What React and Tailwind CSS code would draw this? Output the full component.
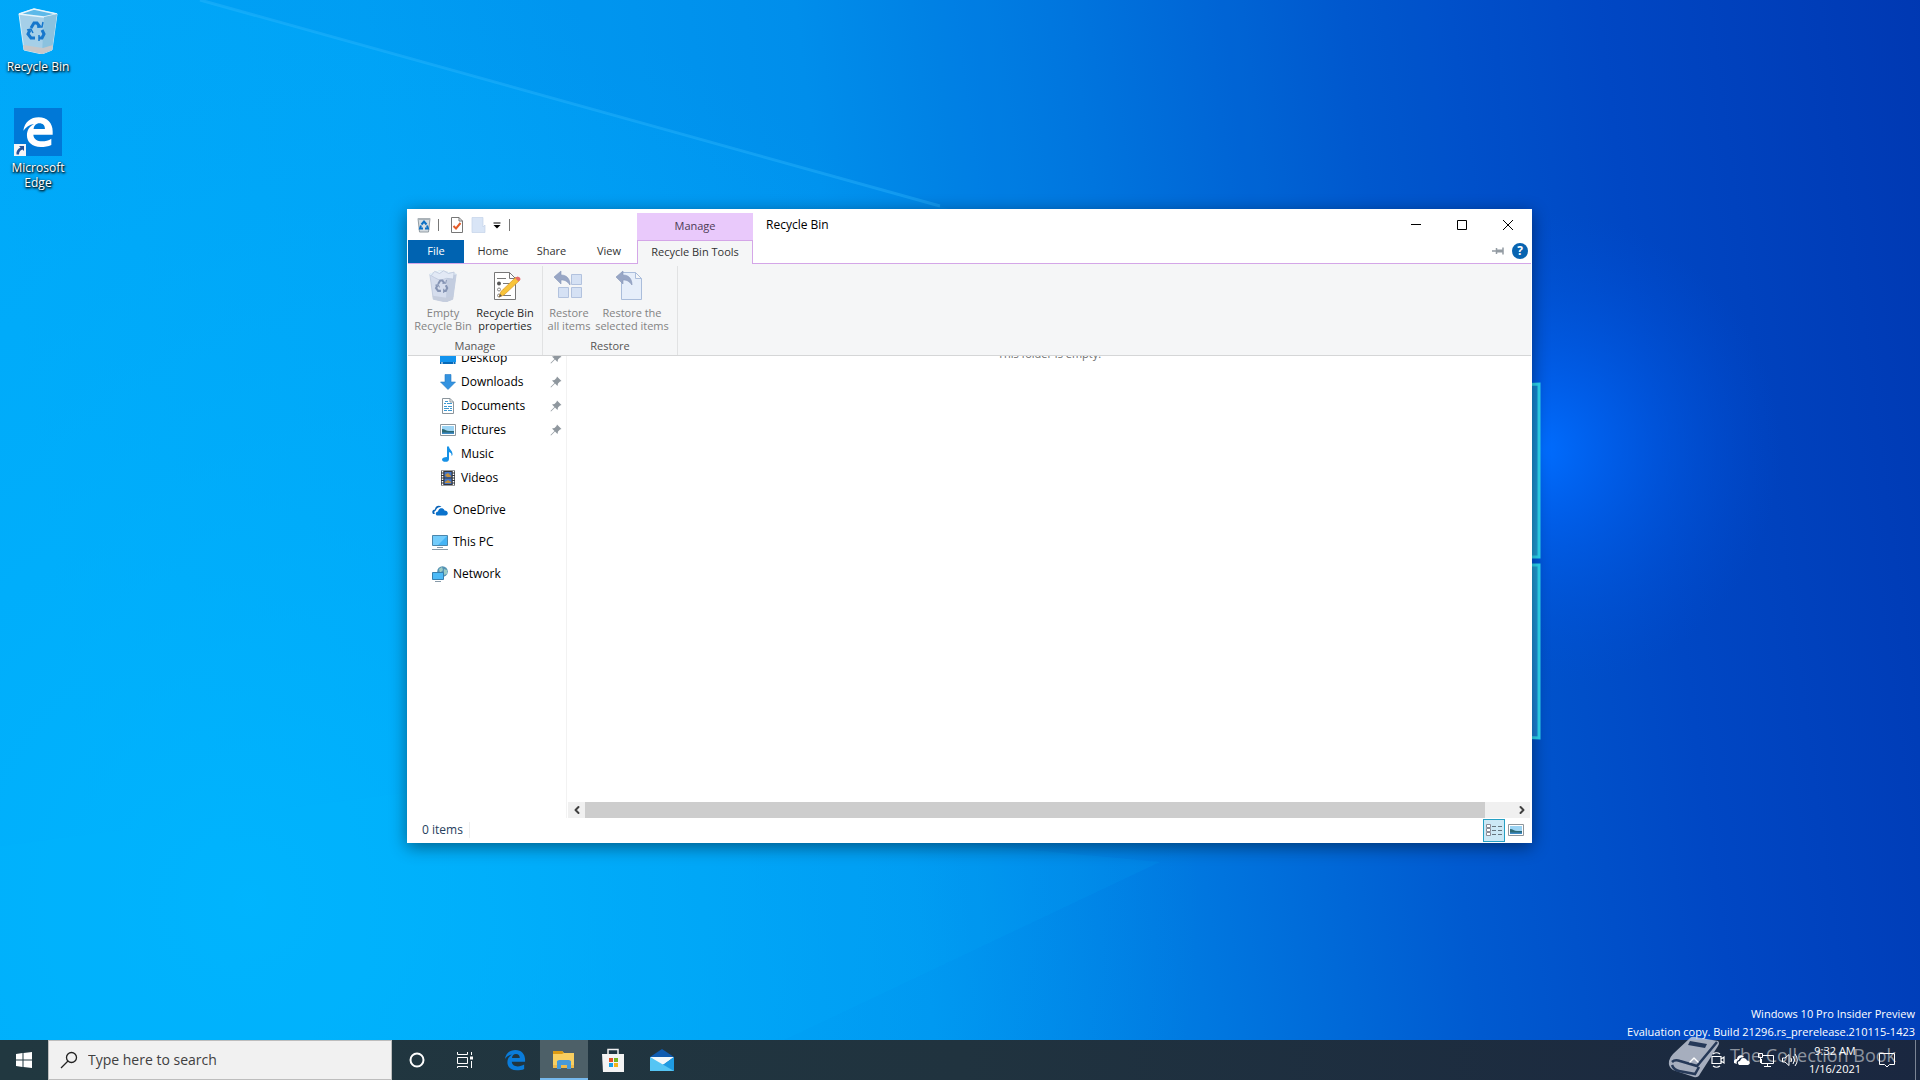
import React, { useState } from 'react';
import { ChevronLeft, ChevronRight, ChevronUp } from 'lucide-react';

/** Desktop background with the light beams and the edge of the glowing window */
const Wallpaper = () => (
  <svg className="absolute inset-0 h-full w-full" viewBox="0 0 1920 1080" preserveAspectRatio="xMidYMid slice" aria-hidden="true">
    <defs>
      <linearGradient id="sky" gradientUnits="userSpaceOnUse" x1="0" y1="200" x2="1920" y2="-60">
        <stop offset="0" stopColor="#00a8f9" />
        <stop offset="0.2" stopColor="#00a2f6" />
        <stop offset="0.42" stopColor="#0092ee" />
        <stop offset="0.56" stopColor="#0078e0" />
        <stop offset="0.7" stopColor="#005ad0" />
        <stop offset="0.83" stopColor="#0047c4" />
        <stop offset="1" stopColor="#0038b2" />
      </linearGradient>
      <radialGradient id="cyan" gradientUnits="userSpaceOnUse" cx="250" cy="900" r="950">
        <stop offset="0" stopColor="#00b8ff" stopOpacity="0.8" />
        <stop offset="1" stopColor="#00b0fb" stopOpacity="0" />
      </radialGradient>
      <radialGradient id="glow" gradientUnits="userSpaceOnUse" cx="1540" cy="450" r="240">
        <stop offset="0" stopColor="#006dff" />
        <stop offset="0.3" stopColor="#0062f2" stopOpacity="0.75" />
        <stop offset="1" stopColor="#0050d8" stopOpacity="0" />
      </radialGradient>
      <linearGradient id="pane" x1="0" x2="0" y1="0" y2="1">
        <stop offset="0" stopColor="#1688d6" />
        <stop offset="0.5" stopColor="#22a0d8" />
        <stop offset="1" stopColor="#1c83dc" />
      </linearGradient>
    </defs>
    <rect width="1920" height="1080" fill="url(#sky)" />
    <rect width="1920" height="1080" fill="url(#cyan)" />
    <rect width="1920" height="1080" fill="url(#glow)" />
    <path d="M200 0 L940 206 L1100 260 L1500 390 L1500 0Z" fill="#003ea8" opacity="0.04" />
    <path d="M200 0 L940 206" stroke="#35bcff" strokeWidth="3" opacity="0.35" />
    <path d="M0 846 L410 792 L1160 862 L700 1080 L0 1080Z" fill="#00bfff" opacity="0.1" />
    <path d="M1500 386 L1539 384 V557 H1500Z M1500 565 H1539 V738 L1500 736Z" fill="url(#pane)" stroke="#2fdcf5" strokeWidth="3" />
  </svg>
);

const Recycle = ({ color = '#1677cc' }) => (
  <g fill="none" stroke={color} strokeWidth="3">
    <path d="M19 22l3-5h3l3 4M30 24l2 4-2 4h-3M23 32h-4l-3-4 2-4" />
    <path d="M25 21h5l1-5M27 29v6M15 24l4-1 2 4" strokeWidth="1.5" />
  </g>
);

const BinIcon = ({ className, faded }) => (
  <svg className={className} viewBox="4 2 44 46" aria-hidden="true">
    <path d="M7 8 22 3 45 8 40 44 30 48 12 44Z" fill={faded ? '#d5dded' : '#a5cfe8'} stroke={faded ? '#b7c2d8' : '#d5effa'} />
    <path d="M7 8 32 11 45 8 22 3Z" fill={faded ? '#eef2fa' : '#5db9e9'} stroke="#e7f5fc" strokeWidth="1.5" />
    <path d="M32 11 45 8 40 44 30 48Z" fill={faded ? '#c3cde0' : '#8bc2df'} />
    <path d="M11 39 31 42 41 39 40 44 30 48 12 44Z" fill={faded ? '#c5cddd' : '#c7c7c9'} />
    {faded && <path d="M9 10 14 4 21 7 27 3 34 7 42 5 41 15 31 14 22 17 14 13Z" fill="#e2e9f5" stroke="#b5c1d7" />}
    <Recycle color={faded ? '#8594b4' : '#1677cc'} />
  </svg>
);

const SmallBin = () => (
  <svg className="h-4 w-4" viewBox="0 0 16 16" aria-hidden="true">
    <path d="M2 1.500H14L12.500 15H3.500Z" fill="#d5dce1" stroke="#939da4" />
    <path d="M2 1H14V3H2Z" fill="#aab2b8" />
    <path d="M5.500 7.500 8 4.500 10.500 7.500M11 8.500l1 3H9M7 11.500H4l1-3" fill="none" stroke="#0b6fc4" strokeWidth="2" />
  </svg>
);

const EdgeLogo = ({ className }) => (
  <svg className={className} viewBox="0 0 24 24" fill="currentColor" aria-hidden="true">
    <path d="M1 11C2 4.500 6.500 1 12.500 1 19 1 23 5.500 23 11.500V14H8.500c.2 3.300 3 5 6.500 5 2.500 0 5-.7 7-2v4.700c-2.300 1.100-5 1.600-8 1.600C7.500 23.300 3.700 19.500 3.700 14.500c0-3.800 2-6.800 5.300-8.500C5.500 6.400 3 8.300 1 11ZM8.700 9.700h8.500C17.200 7 15.700 5.400 13 5.400c-2.400 0-4 1.700-4.300 4.300Z" />
  </svg>
);

const PinIcon = () => (
  <svg className="h-3 w-3" viewBox="0 0 12 12" aria-hidden="true">
    <path d="M7 .500 11.500 5 10 5.500 8 7.500 7.500 10 5 7.500 1 11.500.500 11 4.500 7 2 4.500 4.500 4 6.500 2Z" fill="#8f979e" />
  </svg>
);

/** 16px icons of the navigation pane */
const NavIcon = ({ type }) => (
  <svg className="h-4 w-4 shrink-0" viewBox="0 0 16 16" aria-hidden="true">
    {type === 'desktop' && (
      <>
        <path d="M0 2H16V14H0Z" fill="#1193ee" />
        <path d="M0 12H16V14H0Z" fill="#0569b8" />
        <path d="M1 13h2M13 13h1M15 13h1" stroke="#fff" />
      </>
    )}
    {type === 'downloads' && <path d="M5 .500H11V8H15.500L8 15.500.500 8H5Z" fill="#3493e0" stroke="#2379c4" strokeWidth=".6" />}
    {type === 'documents' && (
      <>
        <path d="M2.500.500H10L13.500 4V15.500H2.500Z" fill="#fff" stroke="#8b959c" />
        <path d="M10 .500V4H13.500" fill="none" stroke="#8b959c" />
        <path d="M5 3.500h3M4 5.500h2M7 5.500h5M4 8.500h3M8 8.500h4M4 10.500h5M10 10.500h2M4 12.500h3M8 12.500h4" fill="none" stroke="#3d98d0" />
      </>
    )}
    {type === 'pictures' && (
      <>
        <path d="M.500 2.500H15.500V13.500H.500Z" fill="#fff" stroke="#8e969c" />
        <path d="M2 4H14V12H2Z" fill="#9cd4f4" />
        <path d="M2 7c3 0 4 2 7 2h5v3H2Z" fill="#2c6975" />
        <path d="M2 10.500H14V12H2Z" fill="#3e8bc5" />
      </>
    )}
    {type === 'music' && <path d="M7 .500H9C9 3.500 13 4.500 12.500 9L11.500 10C12 7 10 6.500 9 6V13C9 15 7.500 15.800 5.500 15.800S2 15 2 13.500 4 11 7 11Z" fill="#1791e6" />}
    {type === 'videos' && (
      <>
        <path d="M1 .500H15V15.500H1Z" fill="#33373c" />
        <path d="M2.500 1V15M13.500 1V15" stroke="#fff" strokeWidth="1.500" strokeDasharray="1.500 1" />
        <path d="M4.500 2H11.500V7.500H4.500ZM4.500 8.500H11.500V14H4.500Z" fill="#4477c8" />
        <path d="M5 5l3-2 3 3v1H7ZM5 12l3-2 3 2v1H5Z" fill="#c5903c" />
      </>
    )}
    {type === 'onedrive' && (
      <>
        <path d="M1 12C-.5 10 .500 7.500 3 7.500 3 4 7 2.500 9.500 5 6 4.500 4 7 4 8.500 2 9 2 11 3 12Z" fill="#0a64b8" />
        <path d="M5 13.500C3 13 3.500 9.500 6 9.500 6.500 5.500 11.500 5 12.500 8.500 16 8.500 17 12.500 14 13.500Z" fill="#0a72cc" />
      </>
    )}
    {type === 'pc' && (
      <>
        <path d="M.500 1.500H15.500V11.500H.500Z" fill="#45b4f5" stroke="#4a86ac" />
        <path d="M1 2H15L6 11H1Z" fill="#73ccfb" />
        <path d="M5 13.500H11M0 15.500H16" stroke="#879aa8" />
      </>
    )}
    {type === 'network' && (
      <>
        <circle cx="10.500" cy="5.500" r="5.300" fill="#5593b4" />
        <path d="M7 3l3-2 1 3-3 3ZM12 3l3 1v4l-3 1Z" fill="#9ccbc4" />
        <path d="M.500 6.500H11.500V13.500H.500Z" fill="#4dbaf6" stroke="#377fad" />
        <path d="M3 15.500H9" stroke="#879aa8" />
      </>
    )}
  </svg>
);

const PropertiesIcon = () => (
  <svg className="h-8 w-8" viewBox="0 0 32 32" aria-hidden="true">
    <path d="M5.500 2.500H20.500L26.500 8.500V29.500H5.500Z" fill="#fff" stroke="#777" />
    <path d="M20.500 2.500V8.500H26.500M8 8.500H17M14 13.500H22M14 19.500H18M14 25.500H22" fill="none" stroke="#777" />
    <circle cx="10" cy="13.500" r="2" fill="#555" />
    <circle cx="10" cy="19.500" r="1.500" fill="#fff" stroke="#888" />
    <circle cx="10" cy="25.500" r="1.500" fill="#fff" stroke="#888" />
    <path d="M10 27 12 21.500 27 7 30.500 10.500 15 25Z" fill="#f8c43a" stroke="#d9962b" strokeWidth=".7" />
    <path d="M10 27 11 24 13 26Z" fill="#555" />
    <path d="M26 8 28.500 6.500Q31.500 7 31.500 9.500L29.500 11.500Z" fill="#e66b6b" />
  </svg>
);

const RestoreIcon = ({ single }) => (
  <svg className="h-8 w-8" viewBox="0 0 32 32" aria-hidden="true">
    {single ? (
      <path d="M5.500 2.500H19.500L25.500 8.500V29.500H5.500Z M19.500 2.500V8.500H25.500" fill="#e6eefa" stroke="#aabddb" />
    ) : (
      <path d="M18.500 4.500H28.500V14.500H18.500ZM5.500 17.500H15.500V27.500H5.500ZM18.500 17.500H28.500V27.500H18.500Z" fill="#d5e1f4" stroke="#b2c2de" />
    )}
    <path d={single ? 'M0 7 7 1V5C13 5 16 9 16 15 13 11 11 10 7 10V14Z' : 'M1 7 8 1V5C14 5 17 9 17 15 14 11 12 10 8 10V14Z'} fill="#98a6c5" stroke="#8797ba" strokeWidth=".6" />
  </svg>
);

const RibbonButton = ({ icon, lines, disabled, className }) => (
  <button
    disabled={disabled}
    className={`flex flex-col items-center whitespace-nowrap text-[11px] leading-[13px] ${disabled ? 'text-[#838383]' : 'text-[#262626]'} ${className}`}
  >
    {icon}
    <span className="mt-1">
      {lines[0]}
      <br />
      {lines[1]}
    </span>
  </button>
);

const TitleBar = () => (
  <header className="flex h-[30px] shrink-0 text-xs">
    <div className="flex w-[229px] items-center pl-2">
      <SmallBin />
      <span className="ml-[6px] h-3 w-px bg-[#777]" />
      <button aria-label="Properties" className="ml-[10px]">
        <svg className="h-4 w-4" viewBox="0 0 16 16">
          <path d="M2.500.500H10L13.500 4V15.500H2.500Z M10 .500V4H13.500" fill="#fff" stroke="#777" />
          <path d="M4.500 9 7 11.500 11.500 6" fill="none" stroke="#e45b28" strokeWidth="2" />
        </svg>
      </button>
      <button aria-label="New folder" disabled className="ml-[6px]">
        <svg className="h-4 w-4" viewBox="0 0 16 16">
          <path d="M1 .500H12V10L14 8V15.500H1Z" fill="#d9e5f6" stroke="#c4d3e8" strokeWidth=".7" />
        </svg>
      </button>
      <button aria-label="Customize Quick Access Toolbar" className="ml-1">
        <svg className="h-3 w-3" viewBox="0 0 12 12">
          <path d="M2.500 4H9.500" stroke="#000" />
          <path d="M2.500 6H9.500L6 9.500Z" />
        </svg>
      </button>
      <span className="ml-[6px] h-3 w-px bg-[#777]" />
    </div>
    <div className="mt-[3px] flex w-[116px] items-center justify-center bg-[#e9c9fb] text-[11px] text-[#4c3b55]">Manage</div>
    <h1 className="ml-[13px] flex-1 self-center">Recycle Bin</h1>
    <div className="flex h-[29px]">
      <button aria-label="Minimize" className="flex w-[46px] items-center justify-center">
        <svg className="h-[10px] w-[10px]" viewBox="0 0 10 10"><path d="M0 4.500H10" stroke="#000" /></svg>
      </button>
      <button aria-label="Maximize" className="flex w-[46px] items-center justify-center">
        <svg className="h-[10px] w-[10px]" viewBox="0 0 10 10"><path d="M.500.500H9.500V9.500H.500Z" stroke="#000" fill="none" /></svg>
      </button>
      <button aria-label="Close" className="flex w-[46px] items-center justify-center">
        <svg className="h-[10px] w-[10px]" viewBox="0 0 10 10"><path d="M0 0 10 10M10 0 0 10" stroke="#000" /></svg>
      </button>
    </div>
  </header>
);

const RibbonTabs = () => (
  <nav className="flex h-6 shrink-0 border-b border-[#d4a6e8] text-[11px] text-[#333]">
    <button className="w-14 bg-[#0063b1] text-white">File</button>
    <button className="w-[58px]">Home</button>
    <button className="w-[59px]">Share</button>
    <button className="w-14">View</button>
    <button className="-mb-px h-6 w-[116px] border border-b-0 border-[#d4a6e8] bg-[#f5f6f7]">Recycle Bin Tools</button>
    <div className="flex flex-1 items-center justify-end gap-2 pr-[3px] pb-px">
      <button aria-label="Pin the ribbon">
        <svg className="h-3 w-3" viewBox="0 0 12 12">
          <path d="M0 6H4M4.500 3V9M11 2.500V9.500" stroke="#939ba2" strokeWidth="1.500" />
          <path d="M5 4.500H11V7.500H5Z" fill="#939ba2" />
        </svg>
      </button>
      <button aria-label="Help" className="h-4 w-4 rounded-full bg-[#0864b1] text-xs leading-4 font-bold text-white">?</button>
    </div>
  </nav>
);

const Ribbon = () => (
  <section className="flex h-[92px] shrink-0 border-b border-[#d5d6d7] bg-[#f5f6f7] pt-[2px] text-[11px] text-[#555]">
    <div className="flex w-[135px] flex-col justify-between border-r border-[#e1e2e3] pt-1 pb-px">
      <div className="flex pl-[3px]">
        <RibbonButton className="w-16" disabled icon={<BinIcon faded className="h-8 w-8" />} lines={['Empty', 'Recycle Bin']} />
        <RibbonButton className="w-[60px]" icon={<PropertiesIcon />} lines={['Recycle Bin', 'properties']} />
      </div>
      <span className="text-center leading-4">Manage</span>
    </div>
    <div className="flex w-[135px] flex-col justify-between border-r border-[#e1e2e3] pt-1 pb-px">
      <div className="flex pl-px">
        <RibbonButton className="w-[50px]" disabled icon={<RestoreIcon />} lines={['Restore', 'all items']} />
        <RibbonButton className="w-[76px]" disabled icon={<RestoreIcon single />} lines={['Restore the', 'selected items']} />
      </div>
      <span className="text-center leading-4">Restore</span>
    </div>
  </section>
);

const quickAccess = [
  { name: 'Desktop', type: 'desktop', pinned: true },
  { name: 'Downloads', type: 'downloads', pinned: true },
  { name: 'Documents', type: 'documents', pinned: true },
  { name: 'Pictures', type: 'pictures', pinned: true },
  { name: 'Music', type: 'music' },
  { name: 'Videos', type: 'videos' },
];

const places = [
  { name: 'OneDrive', type: 'onedrive' },
  { name: 'This PC', type: 'pc' },
  { name: 'Network', type: 'network' },
];

const Sidebar = () => (
  <aside className="w-[159px] shrink-0 overflow-hidden border-r border-[#f2f2f2] text-xs">
    {/* list is scrolled down a little, so the first row is partly hidden */}
    <ul className="-mt-[10px]">
      {quickAccess.map((item) => (
        <li key={item.name}>
          <button className="flex h-6 w-full items-center gap-[5px] pr-1 pl-8">
            <NavIcon type={item.type} />
            <span className="flex-1 text-left">{item.name}</span>
            {item.pinned && <PinIcon />}
          </button>
        </li>
      ))}
      {places.map((item) => (
        <li key={item.name} className="mt-2">
          <button className="flex h-6 w-full items-center gap-[5px] pl-6">
            <NavIcon type={item.type} />
            <span>{item.name}</span>
          </button>
        </li>
      ))}
    </ul>
  </aside>
);

const FileList = () => (
  <main className="flex min-w-0 flex-1 flex-col overflow-hidden pl-px">
    <p className="-mt-[10px] flex-1 text-center text-[11px] leading-4 text-[#6d6d6d]">This folder is empty.</p>
    <div className="mr-px flex h-4 shrink-0 bg-[#f0f0f0] text-[#404040]">
      <button aria-label="Scroll left" className="flex w-[17px] items-center justify-center"><ChevronLeft size={12} strokeWidth={4} /></button>
      <div className="flex-1"><div className="h-full w-[97%] bg-[#cdcdcd]" /></div>
      <button aria-label="Scroll right" className="flex w-[17px] items-center justify-center"><ChevronRight size={12} strokeWidth={4} /></button>
    </div>
  </main>
);

const StatusBar = () => (
  <footer className="flex h-6 shrink-0 items-center text-xs text-[#26405e]">
    <span className="w-[62px] border-r border-[#eee] pl-[14px]">0 items</span>
    <div className="ml-auto flex h-full items-center pr-[7px]">
      <button aria-label="Details view" className="flex h-[23px] w-[22px] items-center justify-center border border-[#26a0c4] bg-[#cce8f5]">
        <svg className="h-4 w-4 shrink-0" viewBox="0 0 16 16">
          <path d="M.500 2.500H4.500V5.500H.500ZM.500 6.500H4.500V9.500H.500ZM.500 10.500H4.500V13.500H.500Z" fill="#fff" stroke="#8b8b96" />
          <path d="M6 4.500H10M12 4.500H16M6 8.500H10M12 8.500H16M6 12.500H10M12 12.500H16" stroke="#66757e" />
        </svg>
      </button>
      <button aria-label="Large icons view" className="ml-[3px]">
        <NavIcon type="pictures" />
      </button>
    </div>
  </footer>
);

const ExplorerWindow = () => (
  <div className="absolute top-[209px] left-[407px] flex h-[634px] w-[1125px] flex-col border border-white bg-white text-black shadow-[0_4px_16px_rgba(0,0,0,0.45)]">
    <TitleBar />
    <RibbonTabs />
    <Ribbon />
    <div className="flex min-h-0 flex-1">
      <Sidebar />
      <FileList />
    </div>
    <StatusBar />
  </div>
);

const DesktopIcons = () => (
  <div className="relative flex w-[76px] flex-col text-center text-xs leading-[15px] text-white">
    <button className="flex h-[101px] flex-col items-center pt-2">
      <BinIcon className="h-[46px] w-11" />
      <span className="mt-[5px] [text-shadow:1px_1px_2px_#000,0_1px_3px_#000]">Recycle Bin</span>
    </button>
    <button className="flex flex-col items-center pt-[7px]">
      <span className="relative flex h-12 w-12 items-center justify-center bg-[#0078d7]">
        <EdgeLogo className="h-8 w-8" />
        <svg className="absolute bottom-0 left-0 h-3 w-3" viewBox="0 0 12 12">
          <path d="M0 0H12V12H0Z" fill="#f4f5f7" />
          <path d="M5 2H10V7L8.500 5.500C6 6.500 5 8 5 10.500H2.500C2 7.500 3.500 5 6.500 3.500Z" fill="#27539b" />
        </svg>
      </span>
      <span className="mt-1 [text-shadow:1px_1px_2px_#000,0_1px_3px_#000]">
        Microsoft
        <br />
        Edge
      </span>
    </button>
  </div>
);

const taskIcons = [
  {
    name: 'Cortana',
    icon: <svg className="h-6 w-6" viewBox="0 0 24 24"><circle cx="12" cy="12" r="6.500" fill="none" stroke="#fff" strokeWidth="2" /></svg>,
  },
  {
    name: 'Task View',
    icon: (
      <svg className="h-6 w-6" viewBox="0 0 24 24" fill="none" stroke="#fff">
        <path d="M3.500 4V6.500H13.500V4M3.500 9.500H13.500V15.500H3.500ZM3.500 20V18.500H13.500V20M17.500 4V7M17.500 13V20" />
        <path d="M16 8.500H19V11.500H16Z" fill="#fff" stroke="none" />
      </svg>
    ),
  },
  { name: 'Microsoft Edge', icon: <EdgeLogo className="h-[22px] w-[22px] text-[#0a7cda]" /> },
  {
    name: 'File Explorer',
    active: true,
    icon: (
      <svg className="h-6 w-6" viewBox="0 0 24 24">
        <path d="M1 3H10L12 5H22V20H1Z" fill="#f9cf60" />
        <path d="M1 3H10L12 5 10 6H1Z" fill="#dd9b14" />
        <path d="M1 17H22V20H1Z" fill="#efb94a" />
        <path d="M5 21V13L7 12H17L19 13V21H15V17H9V21Z" fill="#4799d9" />
      </svg>
    ),
  },
  {
    name: 'Microsoft Store',
    icon: (
      <svg className="h-6 w-6" viewBox="0 0 24 24">
        <path d="M7 7V1.500H17V7" fill="none" stroke="#f1f1f1" strokeWidth="1.500" />
        <path d="M1 6H23V24H2Z" fill="#f4f4f4" />
        <path d="M8 10H12V14H8Z" fill="#e45126" />
        <path d="M13 10H17V14H13Z" fill="#77b41d" />
        <path d="M8 15H12V19H8Z" fill="#17a1e7" />
        <path d="M13 15H17V19H13Z" fill="#f6b416" />
      </svg>
    ),
  },
  {
    name: 'Mail',
    icon: (
      <svg className="h-6 w-6" viewBox="0 0 24 24">
        <path d="M0 9 12 1 24 9V13H0Z" fill="#0f5bb0" />
        <path d="M0 9H24L12 18Z" fill="#f3f8fb" />
        <path d="M24 9V23H0L14 16Z" fill="#1f9be2" />
        <path d="M0 9 24 23H0Z" fill="#55c5f4" />
      </svg>
    ),
  },
];

const Tray = () => (
  <div className="relative ml-auto flex items-center text-white">
    <button aria-label="Show hidden icons" className="flex w-6 justify-center"><ChevronUp size={16} strokeWidth={2} /></button>
    <button aria-label="Meet Now" className="flex w-6 justify-center">
      <svg className="h-4 w-4" viewBox="0 0 16 16" fill="none" stroke="currentColor" strokeWidth="1.200">
        <path d="M2 4.500H11V11.500H2ZM11 7 14 5V11L11 9M3 2Q6.500-.5 10 2M3 14Q6.500 16.500 10 14" />
      </svg>
    </button>
    <button aria-label="OneDrive" className="flex w-6 justify-center">
      <svg className="h-4 w-4" viewBox="0 0 16 16" fill="currentColor">
        <path d="M0 11C-.5 8 1 7 3 7 3 3 8 2 10 5 6 5 5 7 5 8 3 8.500 2 10 3 12Z" />
        <path d="M5 13C3 11 4 9 6 9 7 5 12 5 13 8.500 16 8.500 17 12 14 13Z" />
      </svg>
    </button>
    <button aria-label="Network" className="flex w-6 justify-center">
      <svg className="h-4 w-4" viewBox="0 0 16 16" fill="none" stroke="currentColor">
        <path d="M5 3.500H15.500V11.500H3.500V7M.500 1.500H4.500V5.500H.500ZM2.500 5.500V11M9.500 11.500V14.500M6 14.500H13" />
      </svg>
    </button>
    <button aria-label="Volume" className="flex w-6 justify-center">
      <svg className="h-4 w-4" viewBox="0 0 16 16" fill="none" stroke="currentColor">
        <path d="M.500 6H3L7 2.500V13.500L3 10H.500ZM9 6Q10.500 8 9 10M11 4Q14 8 11 12M13 2Q17.500 8 13 14" />
      </svg>
    </button>
    <button className="w-[66px] text-center text-[11px] leading-[18px]">
      9:32 AM
      <br />
      1/16/2021
    </button>
    <button aria-label="Notifications" className="flex w-[38px] justify-center">
      <svg className="h-4 w-4" viewBox="0 0 16 16" fill="none" stroke="currentColor">
        <path d="M.500 1.500H15.500V12.500H10.500L8 15 5.500 12.500H.500Z" />
      </svg>
    </button>
    <button aria-label="Show desktop" className="ml-[9px] h-10 w-[5px] border-l border-[#7b8494]" />
  </div>
);

/** Book logo and name stamped over the corner of the screen */
const BookStamp = () => (
  <div className="pointer-events-none absolute right-6 bottom-0 flex items-start text-white/50">
    <svg className="h-11 w-[52px]" viewBox="0 0 52 44" aria-hidden="true">
      <path d="M22 2Q24 0 27 1L50 5Q52 7 50 10L32 38Q30 42 26 41L5 34Q0 31 1 25Q2 21 5 18Z" fill="#c9cfdd" opacity=".8" />
      <path d="M4 26Q7 23 12 25L29 30 49 6M4 29Q6 34 11 35L27 38 31 31" fill="none" stroke="#263958" strokeWidth="2.500" />
      <path d="M22 5 39 8 37 12 20 9Z" fill="#263958" />
    </svg>
    <span className="mt-[7px] ml-[10px] text-lg leading-6">The Collection Book</span>
  </div>
);

const Taskbar = () => {
  const [query, setQuery] = useState('');

  return (
    <div className="relative flex h-10 shrink-0 bg-linear-to-r from-[#213840] via-[#20333f] to-[#1a2740]">
      <button aria-label="Start" className="flex w-12 items-center justify-center">
        <svg className="h-4 w-4" viewBox="0 0 16 16" fill="#fff">
          <path d="M0 2 6.500 1V7.500H0ZM7.500 1 16 0V7.500H7.500ZM0 8.500H6.500V15L0 14ZM7.500 8.500H16V16L7.500 15Z" />
        </svg>
      </button>
      <label className="flex w-[344px] items-center border border-[#bdbdbd] bg-[#f1f1f1] pl-[11px]">
        <svg className="h-[18px] w-[18px]" viewBox="0 0 18 18" fill="none" stroke="#222" strokeWidth="1.300">
          <circle cx="11.500" cy="6.500" r="5" />
          <path d="M8 10 1 17" />
        </svg>
        <input
          aria-label="Search"
          placeholder="Type here to search"
          className="ml-[10px] w-64 bg-transparent text-sm text-[#333] outline-none placeholder:text-[#404040]"
          value={query}
          onChange={(e) => setQuery(e.target.value)}
        />
      </label>
      <div className="ml-px flex gap-px">
        {taskIcons.map((item) => (
          <button
            key={item.name}
            aria-label={item.name}
            className={`flex w-12 items-center justify-center ${item.active ? 'border-b-2 border-[#76b9ed] bg-[#4d6068] pt-[2px]' : ''}`}
          >
            {item.icon}
          </button>
        ))}
      </div>
      <BookStamp />
      <Tray />
    </div>
  );
};

export default function App() {
  return (
    <div className="relative flex h-screen flex-col overflow-hidden font-['Open_Sans','Noto_Sans',sans-serif]">
      <Wallpaper />
      <div className="relative min-h-0 flex-1">
        <DesktopIcons />
        <ExplorerWindow />
        <p className="absolute right-[5px] -bottom-px text-right text-[11px] leading-[18px] text-white">
          Windows 10 Pro Insider Preview
          <br />
          Evaluation copy. Build 21296.rs_prerelease.210115-1423
        </p>
      </div>
      <Taskbar />
    </div>
  );
}
